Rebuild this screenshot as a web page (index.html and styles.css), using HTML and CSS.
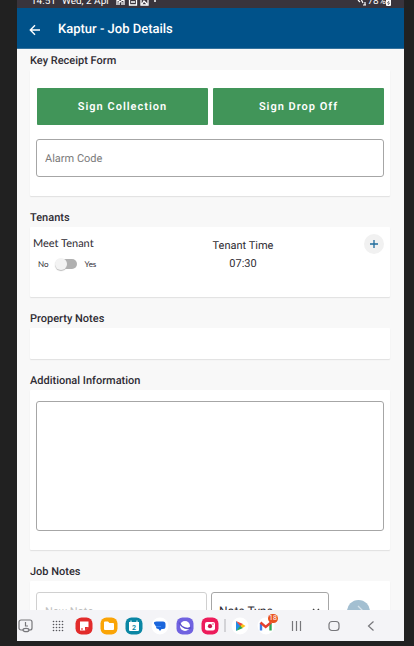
FILE: index.html
```html
<!DOCTYPE html>
<html lang="en">
<head>
<meta charset="utf-8">
<meta name="viewport" content="width=device-width, initial-scale=1">
<title>Kaptur - Job Details</title>
<link rel="stylesheet" href="styles.css">
</head>
<body>
<div class="screen">
  <div class="status">
    <span>14:51</span>
    <span class="status-date">Wed, 2 Apr</span>
    <svg class="status-icons" width="42" height="10" viewBox="0 0 42 10" fill="none" stroke="#fff" stroke-width="1.300">
      <path d="M1 7V1l3 3 4-3v6M3 7V4m3 3V4M13.500 0v7h7V0M15 4h4M25 0v7h7V0M26 6l2-3 3 3"/>
      <circle cx="39" cy="3" r="1" fill="#fff" stroke="none"/>
    </svg>
    <svg class="status-signal" width="10" height="10" viewBox="0 0 10 10" fill="none" stroke="#fff" stroke-width="1.200"><path d="M1 2l2 2M4 1l2 4M6 7h3M8 4v3"/></svg>
    <span>78%</span>
    <svg width="5" height="9" viewBox="0 0 5 9"><rect width="5" height="7" rx="1" fill="#fff"/><path d="M3 2L1.500 4h2L2 6" stroke="#39343c" stroke-width=".7" fill="none"/></svg>
  </div>
  <header class="appbar">
    <button class="back" aria-label="Back"><svg width="12" height="12" viewBox="0 0 12 12" fill="none" stroke="#fff" stroke-width="1.400"><path d="M11 6H1.500M6 1.200L1.300 6 6 10.800"/></svg></button>
    <h1>Kaptur - Job Details</h1>
  </header>
  <main class="content">
    <h2>Key Receipt Form</h2>
    <section class="card receipt">
      <div class="signs">
        <button class="sign">Sign Collection</button>
        <button class="sign">Sign Drop Off</button>
      </div>
      <input class="field" type="text" placeholder="Alarm Code" aria-label="Alarm Code">
    </section>

    <h2>Tenants</h2>
    <section class="card tenants">
      <div class="meet">
        <label for="meet">Meet Tenant</label>
        <div class="toggle-row"><span>No</span><input class="toggle" id="meet" type="checkbox"><span>Yes</span></div>
      </div>
      <div class="time"><span>Tenant Time</span><span>07:30</span></div>
      <div class="add-cell"><button class="add" aria-label="Add tenant"><svg width="8" height="8" viewBox="0 0 8 8" stroke="#1f6c9c" stroke-width="1.300"><path d="M4 0v8M0 4h8"/></svg></button></div>
    </section>

    <h2>Property Notes</h2>
    <section class="card property"></section>

    <h2><label for="info">Additional Information</label></h2>
    <section class="card info">
      <textarea class="field area" id="info"></textarea>
    </section>

    <h2>Job Notes</h2>
    <section class="card notes">
      <input class="field note" type="text" placeholder="New Note" aria-label="New Note">
      <div class="select-wrap">
        <select class="field" aria-label="Note Type"><option>Note Type</option></select>
        <svg class="chevron" width="8" height="6" viewBox="0 0 8 6" fill="none" stroke="#444" stroke-width="1.300"><path d="M1 1l3 3 3-3"/></svg>
      </div>
      <div class="send-cell"><button class="send" aria-label="Send note"><svg width="12" height="12" viewBox="0 0 12 12" fill="none" stroke="#d5e3eb" stroke-width="1.300"><path d="M5 1l5 5-5 5M1 6h9"/></svg></button></div>
    </section>
  </main>
  <nav class="taskbar">
    <div class="slot recent-app"><svg width="16" height="14" viewBox="0 0 16 14" fill="none" stroke="#77777b" stroke-width="1.200"><path d="M5 11H3a2 2 0 0 1-2-2V3a2 2 0 0 1 2-2h9a2 2 0 0 1 2 2v6a2 2 0 0 1-2 2h-1M7.500 3v4H10"/><ellipse cx="8" cy="11" rx="3" ry="1.700"/></svg></div>
    <div class="slot launcher"><svg width="12" height="12" viewBox="0 0 12 12" fill="#55555a"><circle cx="1.500" cy="1.500" r=".8"/><circle cx="4.500" cy="1.500" r=".8"/><circle cx="7.500" cy="1.500" r=".8"/><circle cx="10.500" cy="1.500" r=".8"/><circle cx="1.500" cy="4.500" r=".8"/><circle cx="4.500" cy="4.500" r=".8"/><circle cx="7.500" cy="4.500" r=".8"/><circle cx="10.500" cy="4.500" r=".8"/><circle cx="1.500" cy="7.500" r=".8"/><circle cx="4.500" cy="7.500" r=".8"/><circle cx="7.500" cy="7.500" r=".8"/><circle cx="10.500" cy="7.500" r=".8"/><circle cx="1.500" cy="10.500" r=".8"/><circle cx="4.500" cy="10.500" r=".8"/><circle cx="7.500" cy="10.500" r=".8"/><circle cx="10.500" cy="10.500" r=".8"/></svg></div>
    <div class="apps">
      <svg width="18" height="18" viewBox="0 0 18 18"><rect x=".5" y=".5" width="17" height="17" rx="6" fill="#e22b2b"/><path d="M5 4.500h8.500V10L10 13.500H5z" fill="#fff"/><path d="M10 13.500V10h3.500z" fill="#e22b2b"/><path d="M6 11h2v2H6z" fill="#f08c8c"/></svg>
      <svg width="18" height="18" viewBox="0 0 18 18"><rect x=".5" y=".5" width="17" height="17" rx="6" fill="#faa406"/><path d="M4 5.500q0-1 1-1h3l1.500 1.500H13q1 0 1 1v5q0 1-1 1H5q-1 0-1-1z" fill="#fff"/></svg>
      <svg width="18" height="18" viewBox="0 0 18 18"><rect x=".5" y=".5" width="17" height="17" rx="6" fill="#0a86a4"/><path d="M4 5h10v8q0 1-1 1H5q-1 0-1-1zM5.500 3.500h1V6h-1zM11.500 3.500h1V6h-1z" fill="#fff"/><text x="9" y="12.500" text-anchor="middle" class="day">2</text></svg>
      <svg width="18" height="18" viewBox="0 0 18 18"><circle cx="9" cy="9" r="8.500" fill="#fff"/><path d="M5.500 4.500H12q2.500 0 2.500 2.500v2.500q0 2.500-2.500 2.500h-1.500L9 14l-1.500-2Q5 12 5 9.500L3 6.500Q2.500 4.500 5.500 4.500z" fill="#1b66dc"/><path d="M5 9.500h5" stroke="#408bf2"/></svg>
      <svg width="18" height="18" viewBox="0 0 18 18"><rect x=".5" y=".5" width="17" height="17" rx="6" fill="#7062e0"/><circle cx="9" cy="9" r="5" fill="#fff"/><path d="M3 5.500q2.500 4.500 6 5.500t6-.5" fill="none" stroke="#5b4ecb" stroke-width="1.500"/></svg>
      <svg width="18" height="18" viewBox="0 0 18 18"><rect x=".5" y=".5" width="17" height="17" rx="6" fill="#ed1c5b"/><rect x="4" y="5" width="10" height="8.500" rx="2" fill="#fff"/><circle cx="9" cy="9.200" r="2.100" fill="#c9184c"/><circle cx="12" cy="7" r=".7" fill="#ed1c5b"/></svg>
    </div>
    <div class="divider"></div>
    <div class="apps pinned">
      <svg width="18" height="18" viewBox="0 0 18 18"><circle cx="9" cy="9" r="8.500" fill="#fff"/><path d="M5 4v10l5-5z" fill="#238de8"/><path d="M5 4l7 3-2.500 2.500z" fill="#ef4639"/><path d="M5 14l7-3-2.500-2.500z" fill="#28a65a"/><path d="M9.500 9l2-2L14.500 9l-3 2z" fill="#fac215"/></svg>
      <div class="gmail">
        <svg width="18" height="18" viewBox="0 0 18 18"><circle cx="9" cy="9" r="8.500" fill="#fff"/><path d="M4 13.500V6" stroke="#3f7ee8" stroke-width="2.400"/><path d="M13.500 13.500V6" stroke="#2da653" stroke-width="2.400"/><path d="M3.500 5.500l5.200 4.500L14 5.500" fill="none" stroke="#e5402f" stroke-width="2.400"/></svg>
        <span class="badge">18</span>
      </div>
    </div>
    <div class="keys">
      <button aria-label="Recent apps"><svg width="12" height="12" viewBox="0 0 12 12" stroke="#77777b" stroke-width="1.200"><path d="M1.500 1v10M5.500 1v10M9.500 1v10"/></svg></button>
      <button aria-label="Home"><svg width="12" height="12" viewBox="0 0 12 12" fill="none" stroke="#77777b" stroke-width="1.200"><rect x="1" y="1.500" width="10" height="9" rx="3"/></svg></button>
      <button aria-label="Back"><svg width="12" height="12" viewBox="0 0 12 12" fill="none" stroke="#77777b" stroke-width="1.200"><path d="M8.500 1.500L3.500 6l5 4.500"/></svg></button>
    </div>
  </nav>
</div>
</body>
</html>
```
FILE: styles.css
```css
* { box-sizing: border-box; }

body {
  margin: 0;
  padding: 0 10px 5px 17px;
  height: 100vh;
  background: #212121;
  font-family: Roboto, "Liberation Sans", sans-serif;
  color: #2f2c33;
  text-rendering: geometricPrecision;
}

button {
  border: 0;
  padding: 0;
  background: none;
  font-family: inherit;
  text-rendering: inherit;
  display: flex;
  align-items: center;
  justify-content: center;
}

svg { display: block; flex: none; }

.screen {
  height: 100%;
  display: flex;
  flex-direction: column;
  background: #f8f8f8;
}

.status {
  flex: none;
  height: 8px;
  padding: 0 13px 0 14px;
  display: flex;
  align-items: flex-end;
  overflow: hidden;
  background: #39343c;
  color: #fff;
  font-size: 10px;
  line-height: 12px;
}
.status-date { margin-left: 6px; }
.status-icons { margin-left: 6px; }
.status-signal { margin-left: auto; }

.appbar {
  flex: none;
  height: 41px;
  padding: 3px 12px 0;
  display: flex;
  align-items: center;
  gap: 17px;
  background: #00528a;
  border-bottom: 1px solid #35739e;
}
.back { width: 12px; height: 24px; }
h1 {
  margin: 0;
  color: #fff;
  font-size: 13px;
  line-height: 20px;
  font-weight: 500;
}

.content {
  flex: 1;
  min-height: 0;
  overflow: hidden;
  padding: 0 14px 0 13px;
}
h2 {
  margin: 13px 0 0;
  font-size: 11px;
  line-height: 18px;
  font-weight: 500;
}
h2:first-child { margin-top: 3px; }

.card {
  background: #fff;
  border-radius: 1px;
  box-shadow: 0 1px 1px #e0e0e0;
}

.receipt { padding: 18px 6px 19px; }
.signs { display: flex; gap: 5px; margin-bottom: 14px; padding-left: 1px; }
.sign {
  flex: 1;
  height: 37px;
  border-radius: 1px;
  background: #419559;
  color: #fff;
  font-size: 11px;
  font-weight: 600;
  letter-spacing: 1px;
}

.field {
  display: block;
  width: 100%;
  height: 38px;
  margin: 0;
  padding: 0 8px;
  border: 1px solid #a6a6a6;
  border-radius: 3px;
  background: #fff;
  font-family: inherit;
  font-size: 11px;
  color: #2f2c33;
  text-rendering: inherit;
  appearance: none;
}
.field::placeholder { color: #7b7b7b; opacity: 1; }

.tenants {
  min-height: 70px;
  padding: 7px 6px 0 3px;
  display: grid;
  grid-template-columns: 123fr 174fr 54fr;
}
.meet {
  font-family: Lato, sans-serif;
  font-size: 11px;
  line-height: 20px;
}
.toggle-row {
  display: flex;
  align-items: center;
  gap: 8px;
  padding-left: 5px;
  font-size: 8px;
}
.toggle {
  appearance: none;
  position: relative;
  width: 20px;
  height: 10px;
  margin: 0;
  border-radius: 5px;
  background: #b0b0b0;
}
.toggle::before {
  content: "";
  position: absolute;
  left: -2px;
  top: -1px;
  width: 12px;
  height: 12px;
  border-radius: 50%;
  background: #f3f3f3;
  box-shadow: 0 1px 1px #bbb;
}
.time {
  padding-top: 3px;
  display: flex;
  flex-direction: column;
  align-items: center;
  font-size: 11px;
  line-height: 18px;
}
.add-cell { display: flex; justify-content: flex-end; }
.add {
  width: 20px;
  height: 20px;
  border-radius: 50%;
  background: #f1f1f1;
}

.property { height: 31px; }

.info { padding: 11px 6px 19px; }
.area { height: 130px; padding: 8px; resize: none; }

.notes {
  padding: 11px 6px 19px;
  display: grid;
  grid-template-columns: 171fr 118fr 51fr;
  gap: 4px;
}
.note { border-color: #d0d0d0; }
.note::placeholder { color: #c0c0c0; }
.select-wrap { position: relative; }
.select-wrap .field { padding: 0 7px; font-size: 12px; }
.chevron {
  position: absolute;
  right: 9px;
  top: 50%;
  margin-top: -3px;
  pointer-events: none;
}
.send-cell { display: flex; align-items: center; justify-content: center; }
.send {
  width: 23px;
  height: 23px;
  border-radius: 50%;
  background: #a3bfd1;
}

.taskbar {
  flex: none;
  height: 31px;
  padding-right: 15px;
  display: flex;
  align-items: center;
  background: #f4f4f7;
}
.slot { display: flex; justify-content: center; }
.recent-app { flex: 18 0 0; }
.launcher { flex: 26 0 0; padding-left: 10px; }
.apps { flex: 152 0 0; display: flex; justify-content: space-around; }
.pinned { flex-grow: 52; }
.divider { width: 2px; height: 13px; margin: 0 1px; background: #d3d3d7; }
.day { font: 700 7px Roboto, sans-serif; fill: #0a86a4; }
.gmail { position: relative; }
.badge {
  position: absolute;
  top: -3px;
  right: -3px;
  width: 10px;
  height: 9px;
  border-radius: 5px;
  background: #e9521f;
  color: #fff;
  font-size: 7px;
  line-height: 9px;
  text-align: center;
}
.keys { flex: 110 0 0; display: flex; }
.keys button { flex: 1; height: 30px; }
```
